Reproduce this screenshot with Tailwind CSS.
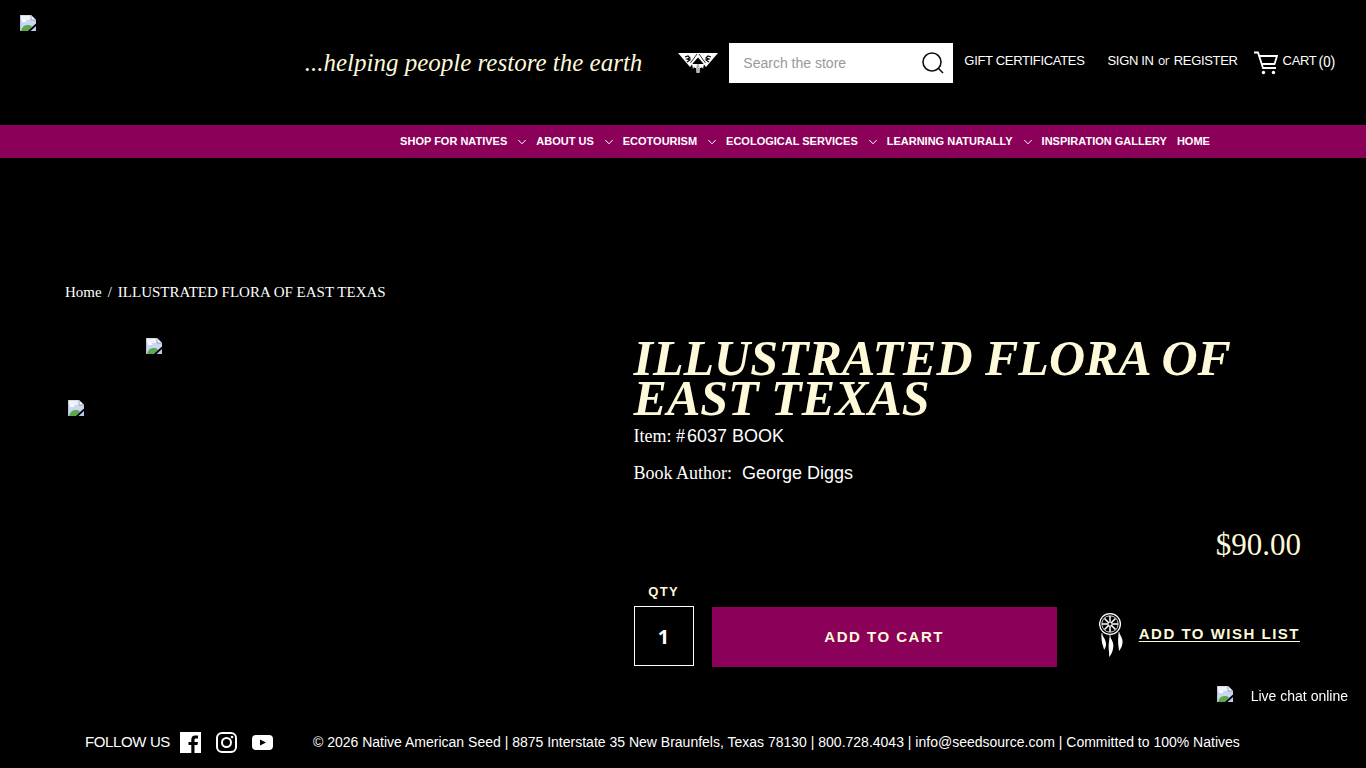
<!DOCTYPE html>
<html lang="en">
<head>
  <meta charset="UTF-8">
  <meta name="viewport" content="width=device-width, initial-scale=1.0">
  <title>ILLUSTRATED FLORA OF EAST TEXAS - Native American Seed</title>
  <script src="https://cdn.jsdelivr.net/npm/@tailwindcss/browser@4"></script>
</head>
<body class="bg-black font-['Liberation_Sans',Arial,sans-serif] text-white">
  <svg class="hidden" xmlns="http://www.w3.org/2000/svg">
    <symbol id="missing-image" viewBox="0 0 16 16">
      <path d="M0 0h11l5 5v3.500L7.500 16H0z" fill="#c9d7f4"></path>
      <path d="M0 0h11l5 5H0z" fill="#eef2fc"></path>
      <path d="M2 6c0-2 3-2 3-1 2 0 2 2 0 2H2z" fill="#fff"></path>
      <path d="M1 16c1-4 3-6 6-6 2 0 4 0 5 2l-4.500 4z" fill="#5ba84e"></path>
      <path d="M11 0v5h5z" fill="#f8faff" stroke="#8b919c" stroke-width=".8"></path>
      <path d="M0 0h11M.4 0v16" stroke="#b5bac4" stroke-width=".8"></path>
      <path d="M16 11v5h-5.500z" fill="#b7cbe9"></path>
    </symbol>
    <symbol id="chevron" viewBox="0 0 8 6">
      <path d="M.3 1 4 4.800 7.700 1" fill="none" stroke="#fff" stroke-width="1"></path>
    </symbol>
  </svg>

  <div class="flex min-h-screen flex-col">
    <header>
      <div class="flex h-[125px] items-center justify-between pr-[31px] pl-5">
        <a href="#" class="mt-[15px] self-start" aria-label="Native American Seed">
          <svg class="h-4 w-4"><use href="#missing-image"></use></svg>
        </a>
        <div class="flex items-center">
          <p class="mr-9 font-['Liberation_Serif',serif] text-[25px] text-[#fdf9d9] italic">...helping people restore the earth</p>
          <svg class="mr-[11px] h-5 w-10" viewBox="0 0 40 20">
            <path d="M0 0h40L28 14l-4-5h-8l-4 5z" fill="#fff"></path>
            <path d="M14 11h4v4l-1 0-1-1-1 2zM22 11h4l-1 5-1-2-1 1-1 0zM18 11h1.700v9H18.500zM20.300 11H22l-.5 9h-1.200z" fill="#fff"></path>
            <path d="m15.500 9.500 4.500-5 4.500 5z" fill="#000"></path>
            <path d="M19 1 12.500 10M21 1l6.500 9" fill="none" stroke="#000" stroke-width=".8"></path>
            <path d="m7 4 3-1 2 2-3 1 3 1-3 2M33 4l-3-1-2 2 3 1-3 1 3 2" fill="none" stroke="#000" stroke-width="1.200"></path>
          </svg>
          <form class="mr-[11px] flex h-10 w-56 items-center bg-white">
            <input type="search" aria-label="Search" placeholder="Search the store" class="h-full w-0 flex-1 pl-3.5 text-sm text-black placeholder:text-[#999] focus:outline-none">
            <button type="submit" class="mr-2 h-6 w-6" aria-label="Submit search">
              <svg class="h-6 w-6" viewBox="0 0 24 24" fill="none" stroke="#111" stroke-width="1.600">
                <circle cx="11" cy="11" r="9"></circle>
                <path d="m17 17 5 5"></path>
              </svg>
            </button>
          </form>
          <nav class="flex items-center text-[13px] tracking-tight" aria-label="Account">
            <a href="#" class="mr-[23px] mb-[3px]">GIFT CERTIFICATES</a>
            <div class="mr-4 mb-[3px]">
              <a href="#">SIGN IN</a>
              <span class="mx-px font-['Open_Sans',sans-serif] text-xs">or</span>
              <a href="#">REGISTER</a>
            </div>
            <a href="#" class="flex items-center">
              <svg class="mr-[5px] h-6 w-6" viewBox="0 0 24 24" fill="none" stroke="#fff" stroke-width="1.800">
                <path d="M0 1.500h4L9 17h13M5 5h18l-2.500 8H8"></path>
                <circle cx="9.500" cy="21.500" r="1.700" fill="#fff" stroke="none"></circle>
                <circle cx="19.500" cy="21.500" r="1.700" fill="#fff" stroke="none"></circle>
              </svg>
              <span class="mb-[3px]">CART</span>
              <span class="mb-px ml-0.5 font-['Roboto',sans-serif] text-sm">(0)</span>
            </a>
          </nav>
        </div>
      </div>
      <nav class="flex h-[33px] items-center justify-center gap-2.5 bg-[#8b0058] pl-[244px] text-[11px] font-bold" aria-label="Main">
        <a href="#" class="flex items-center gap-[11px]">SHOP FOR NATIVES <svg class="h-1.5 w-2"><use href="#chevron"></use></svg></a>
        <a href="#" class="flex items-center gap-[11px]">ABOUT US <svg class="h-1.5 w-2"><use href="#chevron"></use></svg></a>
        <a href="#" class="flex items-center gap-[11px]">ECOTOURISM <svg class="h-1.5 w-2"><use href="#chevron"></use></svg></a>
        <a href="#" class="flex items-center gap-[11px]">ECOLOGICAL SERVICES <svg class="h-1.5 w-2"><use href="#chevron"></use></svg></a>
        <a href="#" class="flex items-center gap-[11px]">LEARNING NATURALLY <svg class="h-1.5 w-2"><use href="#chevron"></use></svg></a>
        <a href="#">INSPIRATION GALLERY</a>
        <a href="#">HOME</a>
      </nav>
    </header>

    <main class="px-[65px] pt-[124px]">
      <nav class="flex gap-1.5 font-['Liberation_Serif',serif] text-[15px] leading-5" aria-label="Breadcrumb">
        <a href="#">Home</a>
        <span>/</span>
        <a href="#">ILLUSTRATED FLORA OF EAST TEXAS</a>
      </nav>

      <div class="mt-9 grid grid-cols-[46%_54%]">
        <!-- Gallery -->
        <section>
          <a href="#" class="ml-[81px] block w-4" aria-label="Product image">
            <svg class="h-4 w-4"><use href="#missing-image"></use></svg>
          </a>
          <a href="#" class="mt-[46px] ml-[3px] block w-4" aria-label="Thumbnail">
            <svg class="h-4 w-4"><use href="#missing-image"></use></svg>
          </a>
        </section>

        <!-- Details -->
        <section>
          <h1 class="font-['Liberation_Serif',serif] text-[50px] leading-10 font-bold text-[#fdf9d9] italic">ILLUSTRATED FLORA OF EAST TEXAS</h1>
          <dl class="text-lg leading-7">
            <div class="mt-1 flex gap-0.5">
              <dt class="font-['Liberation_Serif',serif]">Item: #</dt>
              <dd>6037 BOOK</dd>
            </div>
            <div class="mt-[9px] flex gap-2.5">
              <dt class="font-['Liberation_Serif',serif]">Book Author:</dt>
              <dd>George Diggs</dd>
            </div>
          </dl>
          <p class="mt-[38px] text-right font-['Liberation_Serif',serif] text-[31px] leading-10 text-[#fdf9d9]">$90.00</p>
          <form class="mt-[17px] flex items-end">
            <div class="mr-[18px] mb-px flex flex-col">
              <label for="qty" class="mb-1 text-center text-[13px] leading-5 font-bold tracking-widest text-[#fdf9d9]">QTY</label>
              <input id="qty" type="text" value="1" class="h-[60px] w-[60px] border border-white text-center font-['Open_Sans',sans-serif] text-xl font-bold focus:outline-none">
            </div>
            <button type="submit" class="mr-[42px] h-[60px] flex-1 bg-[#8b0058] text-[15px] font-bold tracking-widest text-[#fdf9d9]">ADD TO CART</button>
            <a href="#" class="mr-px flex h-[60px] items-center text-[15px] font-bold tracking-widest text-[#fdf9d9]">
              <svg class="mr-4 mb-1 h-[46px] w-6" viewBox="0 0 24 46" fill="none" stroke="#fff">
                <circle cx="11" cy="12" r="10.400" stroke-width="1.300"></circle>
                <circle cx="11" cy="12" r="8.200" stroke-width=".8"></circle>
                <circle cx="11" cy="12" r="2.200" stroke-width="1.300"></circle>
                <path d="M11 4v5M11 15v5M3 12h5M14 12h5M5.500 6.500l3.500 3.500M13 14l3.500 3.500M16.500 6.500 13 10M9 14l-3.500 3.500" stroke-width="1.500"></path>
                <path d="M3 21v3M11 23v5M20 20v4" stroke-width=".8"></path>
                <path d="M2.500 22c2 3 4.500 6 4.500 10 0 3-1 4-2 6 0-3-3-6-2.500-16zM11 25c3 4 4 8 3 12-1 4-2 6-4 8 1-5-2-9 1-20zM20 21c3 4 4 8 3.500 10-.5 4-2 6-3.500 8 0-4-2-9 0-18z" fill="#fff" stroke="none"></path>
              </svg>
              <span class="mb-1.5 underline underline-offset-2">ADD TO WISH LIST</span>
            </a>
          </form>
        </section>
      </div>
    </main>

    <footer class="mt-auto flex h-[52px] items-center pl-[85px]">
      <span class="mr-2.5 text-[15px] tracking-tight">FOLLOW US</span>
      <div class="mr-10 flex items-center gap-[15px]">
        <a href="#" aria-label="Facebook">
          <svg class="h-[21px] w-[21px]" viewBox="0 0 21 21">
            <path d="M0 0h21v21h-6.500v-8h3l.5-3h-3.500V8c0-1 .5-1.500 1.600-1.500H18V3.400h-2.700C12.600 3.400 11.300 5 11.300 7.500V10H8.500v3h2.800v8H0z" fill="#fff"></path>
          </svg>
        </a>
        <a href="#" aria-label="Instagram">
          <svg class="h-[21px] w-[21px]" viewBox="0 0 21 21" fill="none" stroke="#fff" stroke-width="2">
            <rect x="1" y="1" width="19" height="19" rx="5"></rect>
            <circle cx="10.500" cy="10.500" r="4.500"></circle>
            <circle cx="16" cy="5" r="1.300" fill="#fff" stroke="none"></circle>
          </svg>
        </a>
        <a href="#" aria-label="YouTube">
          <svg class="h-[21px] w-[21px]" viewBox="0 0 21 21">
            <path d="M4 3h13q4 0 4 4v7q0 4-4 4H4q-4 0-4-4V7q0-4 4-4zm4 4.500v6l6-3z" fill="#fff"></path>
          </svg>
        </a>
      </div>
      <p class="text-sm">© 2026 Native American Seed | 8875 Interstate 35 New Braunfels, Texas 78130 | 800.728.4043 | <a href="#">info@seedsource.com</a> | Committed to 100% Natives</p>
    </footer>
  </div>

  <!-- Chat widget -->
  <a href="#" class="fixed right-[18px] bottom-[62px] flex items-center gap-[18px] text-sm">
    <svg class="mb-1 h-4 w-4"><use href="#missing-image"></use></svg>
    Live chat online
  </a>
</body>
</html>
